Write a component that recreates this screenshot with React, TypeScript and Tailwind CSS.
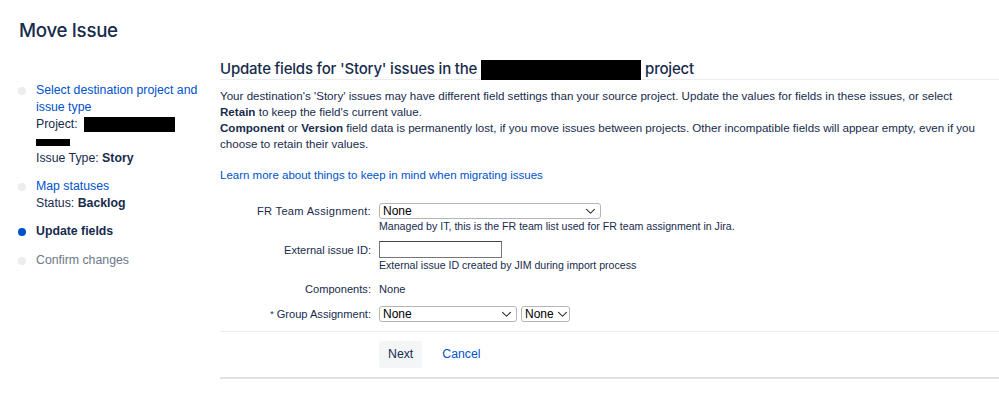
import React from "react";

const Chevron = ({ className = "" }: { className?: string }) => (
  <svg viewBox="0 0 12 8" className={className} fill="none" stroke="#222" strokeWidth="1.2" strokeLinecap="round" strokeLinejoin="round">
    <path d="M1.5 1.5 L6 6 L10.5 1.5" />
  </svg>
);

const Select = ({ width, text = "None" }: { width: string; text?: string }) => (
  <div className={`${width} h-[16px] flex items-center justify-between gap-[3px] border border-[#b5b5b5] rounded-[3px] bg-white pl-[3px] pr-[4px] text-[12px] text-black leading-none`}>
    <span>{text}</span>
    <Chevron className="w-[11px] h-[7px] shrink-0" />
  </div>
);

const Dot = ({ active = false }: { active?: boolean }) => (
  <div className={`w-[8px] h-[8px] rounded-full mt-[5px] mr-[10px] shrink-0 ${active ? "bg-[#0052CC]" : "bg-[#EBECF0]"}`} />
);

export default function App() {
  return (
    <div className="w-[999px] h-[407px] bg-white text-[#172B4D] overflow-hidden" style={{ fontFamily: "'Liberation Sans', Arial, sans-serif" }}>
      <div className="pl-[19px] pt-[19px]">
        <h1 className="text-[18.7px] leading-[24px] font-medium tracking-[-0.3px]" style={{ fontFamily: "Inter, 'Liberation Sans', sans-serif" }}>Move Issue</h1>
      </div>
      <div className="flex mt-[16px]">
        {/* Sidebar */}
        <div className="w-[220px] shrink-0 pl-[18px] pt-[23px] text-[12.3px]">
          <div className="flex">
            <Dot />
            <div className="leading-[17px]">
              <div className="text-[#0052CC]">Select destination project and<br />issue type</div>
              <div className="flex items-center">Project: <span className="inline-block ml-[6px] w-[91px] h-[15px] bg-black" /></div>
              <div className="h-[17px] flex items-center"><span className="inline-block w-[34px] h-[7px] bg-black mt-[1px]" /></div>
              <div>Issue Type: <span className="font-bold">Story</span></div>
            </div>
          </div>
          <div className="flex mt-[11px]">
            <Dot />
            <div className="leading-[17px]">
              <div className="text-[#0052CC]">Map statuses</div>
              <div>Status: <span className="font-bold">Backlog</span></div>
            </div>
          </div>
          <div className="flex mt-[11px]">
            <Dot active />
            <div className="leading-[17px] font-bold">Update fields</div>
          </div>
          <div className="flex mt-[12px]">
            <Dot />
            <div className="leading-[17px] text-[#6B778C]">Confirm changes</div>
          </div>
        </div>

        {/* Main */}
        <div className="flex-1 pt-[1px]">
          <div className="flex items-center border-b border-[#EBECF0] h-[20px] text-[15px] font-medium tracking-[-0.2px]" style={{ fontFamily: "Inter, 'Liberation Sans', sans-serif" }}>
            <span>Update fields for 'Story' issues in the</span>
            <span className="inline-block w-[160px] h-[20px] bg-black mx-[4px]" />
            <span>project</span>
          </div>
          <div className="mt-[8px] text-[11.6px] leading-[16px] max-w-[760px]">
            <p>
              Your destination's 'Story' issues may have different field settings than your source project. Update the values for fields in these issues, or select <span className="font-bold">Retain</span> to keep the field's current value.
            </p>
            <p>
              <span className="font-bold">Component</span> or <span className="font-bold">Version</span> field data is permanently lost, if you move issues between projects. Other incompatible fields will appear empty, even if you choose to retain their values.
            </p>
          </div>
          <div className="mt-[15px] text-[11.5px] leading-[16px] text-[#0052CC]">Learn more about things to keep in mind when migrating issues</div>

          <div className="mt-[20px] text-[11.1px]">
            <div className="flex">
              <div className="w-[151px] text-right leading-[16px] tracking-[0.3px]">FR Team Assignment:</div>
              <div className="ml-[8px]">
                <Select width="w-[222px]" />
                <div className="text-[10.6px] leading-[13px] mt-[1px]">Managed by IT, this is the FR team list used for FR team assignment in Jira.</div>
              </div>
            </div>
            <div className="flex mt-[8px]">
              <div className="w-[151px] text-right leading-[16px] pt-[1px]">External issue ID:</div>
              <div className="ml-[8px]">
                <div className="w-[123px] h-[17px] border border-[#767676] border-t-[#444] bg-white" />
                <div className="text-[10.6px] leading-[13px] mt-[1px]">External issue ID created by JIM during import process</div>
              </div>
            </div>
            <div className="flex mt-[9px] leading-[16px]">
              <div className="w-[151px] text-right">Components:</div>
              <div className="ml-[8px]">None</div>
            </div>
            <div className="flex mt-[9px]">
              <div className="w-[151px] text-right leading-[16px]"><span className="text-[9px] align-top mr-[3px]">*</span>Group Assignment:</div>
              <div className="ml-[8px] flex gap-[4px]">
                <Select width="w-[138px]" />
                <Select width="w-[49px]" />
              </div>
            </div>
          </div>

          <div className="mt-[9px] border-t border-[#EBECF0] pt-[9px] pb-[9px] flex items-center">
            <div className="w-[159px]" />
            <button className="h-[27px] px-[9px] rounded-[3px] bg-[#F4F5F7] text-[12.3px] text-[#172B4D]">Next</button>
            <a className="ml-[20px] text-[12.3px] text-[#0052CC]">Cancel</a>
          </div>
          <div className="h-[2px] bg-[#DFE1E6]" />
        </div>
      </div>
    </div>
  );
}
